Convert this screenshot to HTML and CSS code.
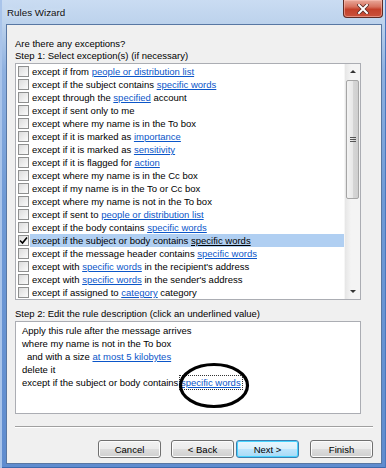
FILE: index.html
```html
<!DOCTYPE html>
<html lang="en">
<head>
  <meta charset="UTF-8" />
  <title>Rules Wizard</title>
  <link rel="stylesheet" href="styles.css">
</head>
<body>
  <div class="window">
    <div class="titlebar">
      <span class="title">Rules Wizard</span>
      <button class="close">
        <svg width="12" height="10" viewBox="0 0 12 10">
          <path d="M2 1 L10 9 M10 1 L2 9" stroke="#5a2a25" stroke-width="3.6" stroke-linecap="square"/>
          <path d="M2 1 L10 9 M10 1 L2 9" stroke="#ffffff" stroke-width="2" stroke-linecap="square"/>
        </svg>
      </button>
    </div>

    <div class="client">
      <p class="label">Are there any exceptions?</p>
      <p class="label">Step 1: Select exception(s) (if necessary)</p>

      <div class="listbox">
        <ul class="rows">
          <li class="row"><span class="check"></span><span class="text">except if from <a>people or distribution list</a></span></li>
          <li class="row"><span class="check"></span><span class="text">except if the subject contains <a>specific words</a></span></li>
          <li class="row"><span class="check"></span><span class="text">except through the <a>specified</a> account</span></li>
          <li class="row"><span class="check"></span><span class="text">except if sent only to me</span></li>
          <li class="row"><span class="check"></span><span class="text">except where my name is in the To box</span></li>
          <li class="row"><span class="check"></span><span class="text">except if it is marked as <a>importance</a></span></li>
          <li class="row"><span class="check"></span><span class="text">except if it is marked as <a>sensitivity</a></span></li>
          <li class="row"><span class="check"></span><span class="text">except if it is flagged for <a>action</a></span></li>
          <li class="row"><span class="check"></span><span class="text">except where my name is in the Cc box</span></li>
          <li class="row"><span class="check"></span><span class="text">except if my name is in the To or Cc box</span></li>
          <li class="row"><span class="check"></span><span class="text">except where my name is not in the To box</span></li>
          <li class="row"><span class="check"></span><span class="text">except if sent to <a>people or distribution list</a></span></li>
          <li class="row"><span class="check"></span><span class="text">except if the body contains <a>specific words</a></span></li>
          <li class="row selected">
            <span class="check">
              <svg width="9" height="9" viewBox="0 0 9 9"><path d="M1 4.5 L3.5 7 L8 1.5" fill="none" stroke="#000" stroke-width="1.6"/></svg>
            </span>
            <span class="text">except if the subject or body contains <a>specific words</a></span>
          </li>
          <li class="row"><span class="check"></span><span class="text">except if the message header contains <a>specific words</a></span></li>
          <li class="row"><span class="check"></span><span class="text">except with <a>specific words</a> in the recipient's address</span></li>
          <li class="row"><span class="check"></span><span class="text">except with <a>specific words</a> in the sender's address</span></li>
          <li class="row"><span class="check"></span><span class="text">except if assigned to <a>category</a> category</span></li>
        </ul>
        <div class="scrollbar">
          <div class="arrow"><span class="tri-up"></span></div>
          <div class="track">
            <div class="thumb"><span class="grip"></span></div>
          </div>
          <div class="arrow"><span class="tri-down"></span></div>
        </div>
      </div>

      <p class="label step2">Step 2: Edit the rule description (click an underlined value)</p>
      <div class="desc">
        <div>Apply this rule after the message arrives</div>
        <div>where my name is not in the To box</div>
        <div class="indent">and with a size <a>at most 5 kilobytes</a></div>
        <div>delete it</div>
        <div>except if the subject or body contains <a class="focus">specific words</a></div>
        <svg class="circle" width="72" height="47" viewBox="0 0 72 47">
          <ellipse cx="36" cy="23.5" rx="33.5" ry="21" fill="none" stroke="#000" stroke-width="3.2"/>
        </svg>
      </div>

      <div class="sep"></div>

      <div class="buttons">
        <button class="btn">Cancel</button>
        <button class="btn back">&lt; Back</button>
        <button class="btn next">Next &gt;</button>
        <button class="btn finish">Finish</button>
      </div>
    </div>
  </div>
</body>
</html>
```

FILE: styles.css
```css
body {
  margin: 0;
  padding: 0;
  font-family: "Liberation Sans", Arial, sans-serif;
  font-size: 9.5px;
  line-height: 13px;
  color: #000;
}

.window {
  width: 386px;
  height: 468px;
  box-sizing: border-box;
  display: flex;
  flex-direction: column;
  padding: 0 4px 4px 6px;
  background: linear-gradient(to bottom, #cadcf2 0, #bcd2ec 24px, #8fb1e0 70px, #6f9ad6 200px, #5f8ccf 100%);
  box-shadow: inset 2px 0 0 #a9c4ea, inset -1px 0 0 #4a78bd, inset 0 -1px 0 #3d69ad;
}

.titlebar {
  height: 24px;
  display: flex;
  align-items: center;
  margin-left: -6px;
  margin-right: -4px;
}

.title {
  padding-left: 7px;
  font-size: 9.8px;
  color: #111;
  text-shadow: 0 0 4px #e6f0fb;
}

.close {
  margin-left: auto;
  margin-right: 3px;
  align-self: flex-start;
  width: 40px;
  height: 18px;
  padding: 0;
  border: 1px solid #5e2a24;
  border-top: none;
  border-radius: 0 0 4px 4px;
  background: linear-gradient(to bottom, #e9a99b 0, #d7715e 40%, #c4402a 55%, #c9513b 100%);
  box-shadow: inset 0 0 0 1px rgba(255, 200, 190, 0.5);
  display: flex;
  align-items: center;
  justify-content: center;
}

.client {
  flex: 1;
  background: #f0f0f0;
  border: 1px solid #5877a3;
  padding: 12px 8px 0 8px;
}

.label {
  margin: 0;
  height: 12px;
  line-height: 13px;
  white-space: nowrap;
}

.label + .label {
  margin-top: 0;
}

.listbox {
  margin-top: 2px;
  width: 346px;
  height: 237px;
  box-sizing: border-box;
  border: 1px solid #abadb3;
  background: #fff;
  display: flex;
  overflow: hidden;
}

.rows {
  flex: 1;
  list-style: none;
  margin: 0;
  padding: 1px 0 0 0;
}

.row {
  height: 13px;
  display: flex;
  align-items: center;
  padding-left: 2px;
  white-space: nowrap;
}

.check {
  width: 11px;
  height: 11px;
  box-sizing: border-box;
  border: 1px solid #8e8f8f;
  background: linear-gradient(135deg, #dcdcdc, #fbfbfb);
  display: flex;
  align-items: center;
  justify-content: center;
  flex-shrink: 0;
}

.text {
  flex: 1;
  margin-left: 1px;
  padding-left: 2px;
  height: 13px;
  line-height: 13px;
}

.selected .text {
  background: #b0cff2;
}

.selected .text a {
  color: #000;
}

a {
  color: #0b56c9;
  text-decoration: underline;
}

.scrollbar {
  width: 15px;
  display: flex;
  flex-direction: column;
  background: linear-gradient(to right, #e6e6e6, #f4f4f4 40%, #f4f4f4);
  border-left: 1px solid #f6f6f6;
}

.arrow {
  height: 15px;
  display: flex;
  align-items: center;
  justify-content: center;
}

.tri-up {
  width: 0;
  height: 0;
  border-left: 3px solid transparent;
  border-right: 3px solid transparent;
  border-bottom: 3px solid #333;
}

.tri-down {
  width: 0;
  height: 0;
  border-left: 3px solid transparent;
  border-right: 3px solid transparent;
  border-top: 3px solid #333;
}

.track {
  flex: 1;
  padding-top: 1px;
}

.thumb {
  height: 119px;
  margin: 0 1px;
  box-sizing: border-box;
  border: 1px solid #a5a5a5;
  border-radius: 2px;
  background: linear-gradient(to right, #f3f3f3, #e8e8e8 50%, #d6d6d6 51%, #cfcfcf);
  display: flex;
  align-items: center;
  justify-content: center;
}

.grip {
  width: 6px;
  height: 5px;
  background: repeating-linear-gradient(to bottom, #555 0, #555 1px, transparent 1px, transparent 2px);
}

.step2 {
  margin-top: 7px;
}

.desc {
  position: relative;
  margin-top: 2px;
  width: 346px;
  height: 93px;
  box-sizing: border-box;
  border: 1px solid #abadb3;
  background: #fff;
  padding: 2px 6px;
  white-space: nowrap;
}

.desc div {
  height: 13px;
}

.desc .indent {
  padding-left: 5px;
}

.focus {
  outline: 1px dotted #333;
  outline-offset: 1px;
}

.circle {
  position: absolute;
  left: 162px;
  top: 40px;
}

.sep {
  margin-top: 12px;
  border-top: 1px solid #a0a0a0;
  border-bottom: 1px solid #fff;
}

.buttons {
  margin-top: 12px;
  display: flex;
  justify-content: flex-end;
}

.btn {
  width: 63px;
  height: 18px;
  padding: 0;
  font-family: "Liberation Sans", Arial, sans-serif;
  font-size: 9.5px;
  color: #000;
  border: 1px solid #707070;
  border-radius: 3px;
  background: linear-gradient(to bottom, #f2f2f2 0, #ebebeb 50%, #dddddd 51%, #cfcfcf 100%);
  box-shadow: inset 0 0 0 1px #fcfcfc;
}

.back {
  margin-left: 10px;
}

.next {
  margin-left: 2px;
  border-color: #3c7fb1;
  background: linear-gradient(to bottom, #eaf6fd 0, #d9f0fc 50%, #bee6fd 51%, #a7d9f5 100%);
  box-shadow: inset 0 0 0 1px #48d4ff;
}

.finish {
  margin-left: 11px;
}
```
